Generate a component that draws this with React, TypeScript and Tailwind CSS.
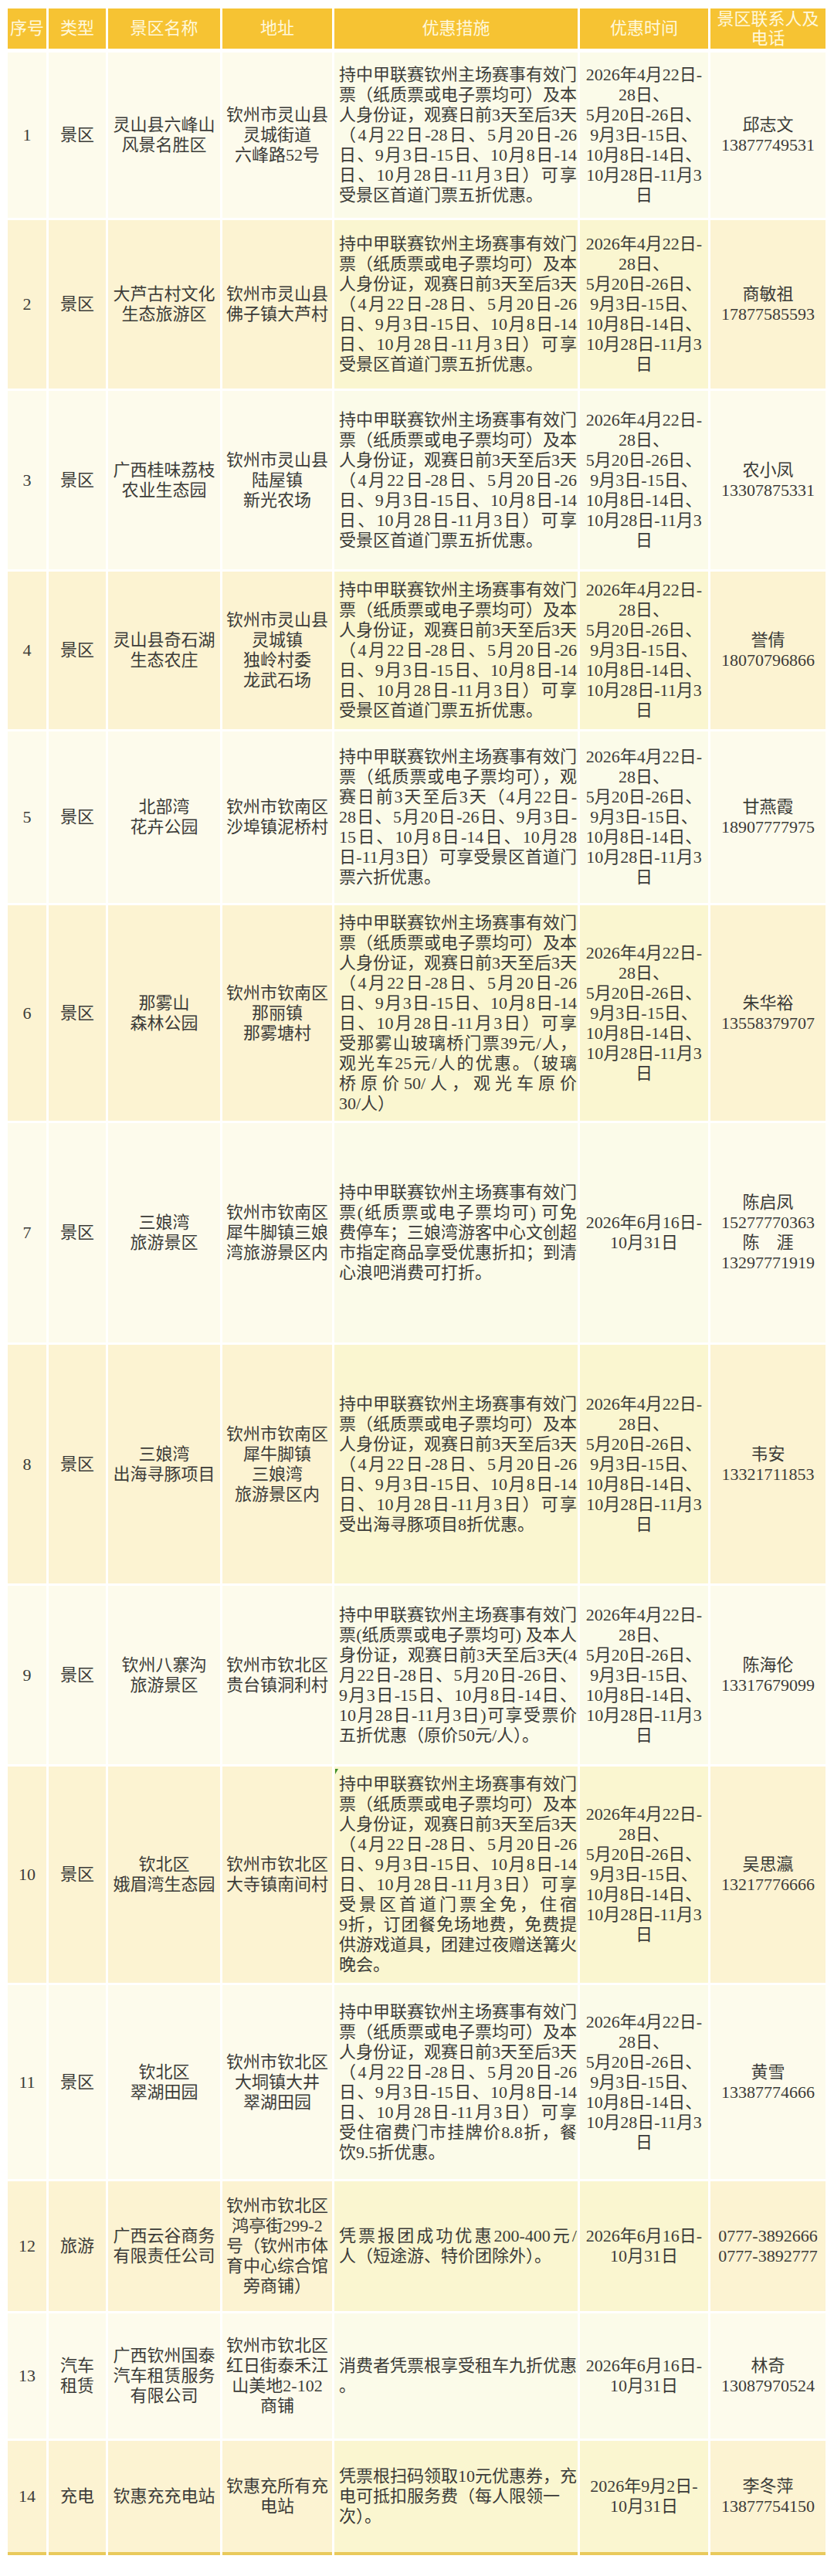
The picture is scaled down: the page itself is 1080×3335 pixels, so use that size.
type Row = {
  no: string;
  type: string[];
  name: string[];
  addr: string[];
  deal: string[];
  plain?: boolean;
  dates: string[];
  contact: string[];
  h: string;
  mark?: boolean;
};

const stdHead = [
  "持中甲联赛钦州主场赛事有效门",
  "票（纸质票或电子票均可）及本",
  "人身份证，观赛日前3天至后3天",
  "（4月22日-28日、5月20日-26",
  "日、9月3日-15日、10月8日-14",
  "日、10月28日-11月3日）可享",
];

const stdDates = [
  "2026年4月22日-",
  "28日、",
  "5月20日-26日、",
  "9月3日-15日、",
  "10月8日-14日、",
  "10月28日-11月3",
  "日",
];

const rows: Row[] = [
  {
    no: "1",
    type: ["景区"],
    name: ["灵山县六峰山", "风景名胜区"],
    addr: ["钦州市灵山县", "灵城街道", "六峰路52号"],
    deal: [...stdHead, "受景区首道门票五折优惠。"],
    dates: stdDates,
    contact: ["邱志文", "13877749531"],
    h: "h-[214px]",
  },
  {
    no: "2",
    type: ["景区"],
    name: ["大芦古村文化", "生态旅游区"],
    addr: ["钦州市灵山县", "佛子镇大芦村"],
    deal: [...stdHead, "受景区首道门票五折优惠。"],
    dates: stdDates,
    contact: ["商敏祖", "17877585593"],
    h: "h-[218px]",
  },
  {
    no: "3",
    type: ["景区"],
    name: ["广西桂味荔枝", "农业生态园"],
    addr: ["钦州市灵山县", "陆屋镇", "新光农场"],
    deal: [...stdHead, "受景区首道门票五折优惠。"],
    dates: stdDates,
    contact: ["农小凤", "13307875331"],
    h: "h-[231px]",
  },
  {
    no: "4",
    type: ["景区"],
    name: ["灵山县奇石湖", "生态农庄"],
    addr: ["钦州市灵山县", "灵城镇", "独岭村委", "龙武石场"],
    deal: [...stdHead, "受景区首道门票五折优惠。"],
    dates: stdDates,
    contact: ["誉倩", "18070796866"],
    h: "h-[204px]",
  },
  {
    no: "5",
    type: ["景区"],
    name: ["北部湾", "花卉公园"],
    addr: ["钦州市钦南区", "沙埠镇泥桥村"],
    deal: [
      "持中甲联赛钦州主场赛事有效门",
      "票（纸质票或电子票均可），观",
      "赛日前3天至后3天（4月22日-",
      "28日、5月20日-26日、9月3日-",
      "15日、10月8日-14日、10月28",
      "日-11月3日）可享受景区首道门",
      "票六折优惠。",
    ],
    dates: stdDates,
    contact: ["甘燕霞", "18907777975"],
    h: "h-[222px]",
  },
  {
    no: "6",
    type: ["景区"],
    name: ["那雾山", "森林公园"],
    addr: ["钦州市钦南区", "那丽镇", "那雾塘村"],
    deal: [
      ...stdHead,
      "受那雾山玻璃桥门票39元/人，",
      "观光车25元/人的优惠。（玻璃",
      "桥原价50/人，观光车原价",
      "30/人）",
    ],
    dates: stdDates,
    contact: ["朱华裕", "13558379707"],
    h: "h-[279px]",
  },
  {
    no: "7",
    type: ["景区"],
    name: ["三娘湾", "旅游景区"],
    addr: ["钦州市钦南区", "犀牛脚镇三娘", "湾旅游景区内"],
    deal: [
      "持中甲联赛钦州主场赛事有效门",
      "票(纸质票或电子票均可) 可免",
      "费停车；三娘湾游客中心文创超",
      "市指定商品享受优惠折扣；到清",
      "心浪吧消费可打折。",
    ],
    dates: ["2026年6月16日-", "10月31日"],
    contact: ["陈启凤", "15277770363", "陈　涯", "13297771919"],
    h: "h-[284px]",
  },
  {
    no: "8",
    type: ["景区"],
    name: ["三娘湾", "出海寻豚项目"],
    addr: ["钦州市钦南区", "犀牛脚镇", "三娘湾", "旅游景区内"],
    deal: [...stdHead, "受出海寻豚项目8折优惠。"],
    dates: stdDates,
    contact: ["韦安", "13321711853"],
    h: "h-[309px]",
  },
  {
    no: "9",
    type: ["景区"],
    name: ["钦州八寨沟", "旅游景区"],
    addr: ["钦州市钦北区", "贵台镇洞利村"],
    deal: [
      "持中甲联赛钦州主场赛事有效门",
      "票(纸质票或电子票均可) 及本人",
      "身份证，观赛日前3天至后3天(4",
      "月22日-28日、5月20日-26日、",
      "9月3日-15日、10月8日-14日、",
      "10月28日-11月3日)可享受票价",
      "五折优惠（原价50元/人）。",
    ],
    dates: stdDates,
    contact: ["陈海伦", "13317679099"],
    h: "h-[231px]",
  },
  {
    no: "10",
    type: ["景区"],
    name: ["钦北区", "娥眉湾生态园"],
    addr: ["钦州市钦北区", "大寺镇南间村"],
    deal: [
      ...stdHead,
      "受景区首道门票全免，住宿",
      "9折，订团餐免场地费，免费提",
      "供游戏道具，团建过夜赠送篝火",
      "晚会。",
    ],
    dates: stdDates,
    contact: ["吴思瀛", "13217776666"],
    h: "h-[280px]",
    mark: true,
  },
  {
    no: "11",
    type: ["景区"],
    name: ["钦北区", "翠湖田园"],
    addr: ["钦州市钦北区", "大垌镇大井", "翠湖田园"],
    deal: [...stdHead, "受住宿费门市挂牌价8.8折，餐", "饮9.5折优惠。"],
    dates: stdDates,
    contact: ["黄雪", "13387774666"],
    h: "h-[251px]",
  },
  {
    no: "12",
    type: ["旅游"],
    name: ["广西云谷商务", "有限责任公司"],
    addr: ["钦州市钦北区", "鸿亭街299-2", "号（钦州市体", "育中心综合馆", "旁商铺）"],
    deal: ["凭票报团成功优惠200-400元/", "人（短途游、特价团除外）。"],
    dates: ["2026年6月16日-", "10月31日"],
    contact: ["0777-3892666", "0777-3892777"],
    h: "h-[168px]",
  },
  {
    no: "13",
    type: ["汽车", "租赁"],
    name: ["广西钦州国泰", "汽车租赁服务", "有限公司"],
    addr: ["钦州市钦北区", "红日街泰禾江", "山美地2-102", "商铺"],
    deal: ["消费者凭票根享受租车九折优惠", "。"],
    dates: ["2026年6月16日-", "10月31日"],
    contact: ["林奇", "13087970524"],
    h: "h-[162px]",
  },
  {
    no: "14",
    type: ["充电"],
    name: ["钦惠充充电站"],
    addr: ["钦惠充所有充", "电站"],
    deal: ["凭票根扫码领取10元优惠券，充", "电可抵扣服务费（每人限领一", "次）。"],
    plain: true,
    dates: ["2026年9月2日-", "10月31日"],
    contact: ["李冬萍", "13877754150"],
    h: "h-[148px]",
  },
];

const cols = "grid grid-cols-[50px_74px_145px_142px_315px_166px_149px] gap-x-[3px]";

function Lines({ lines }: { lines: string[] }) {
  return (
    <div className="text-center">
      {lines.map((l, i) => (
        <div key={i} className="whitespace-nowrap">
          {l}
        </div>
      ))}
    </div>
  );
}

export default function App() {
  const headers = ["序号", "类型", "景区名称", "地址", "优惠措施", "优惠时间"];
  return (
    <main className="min-h-screen bg-white pt-[11px] pl-[10px] font-['Liberation_Serif','Noto_Sans_CJK_SC',serif] text-[22px] leading-[26px] text-[#3b3b38]">
      <div className="w-[1059px] flex flex-col gap-[3px]">
        {/* header */}
        <div className={`${cols} h-[52px] mb-[2px] text-[#fff8dc]`}>
          {headers.map((t) => (
            <div key={t} className="bg-[#f6c333] flex items-center justify-center">
              {t}
            </div>
          ))}
          <div className="bg-[#f6c333] flex items-center justify-center leading-[25px]">
            <Lines lines={["景区联系人及", "电话"]} />
          </div>
        </div>

        {rows.map((r, idx) => {
          const even = idx % 2 === 1;
          const base = even ? "bg-[#fcf3d2]" : "bg-[#fdfbec]";
          const mid = even ? "bg-[#faf6d0]" : "bg-[#fbfbe9]";
          const last = idx === rows.length - 1;
          const edge = last ? "border-b-[4px] border-[#e9c95c]" : "";
          return (
            <div key={r.no} className={`${cols} ${r.h}`}>
              <div className={`${base} ${edge} flex items-center justify-center`}>{r.no}</div>
              <div className={`${base} ${edge} flex items-center justify-center`}>
                <Lines lines={r.type} />
              </div>
              <div className={`${base} ${edge} flex items-center justify-center`}>
                <Lines lines={r.name} />
              </div>
              <div className={`${base} ${edge} flex items-center justify-center`}>
                <Lines lines={r.addr} />
              </div>
              <div className={`${mid} ${edge} relative flex items-center pl-[6px] pr-[1px]`}>
                {r.mark && (
                  <span className="absolute left-[1px] top-[3px] w-0 h-0 border-t-[7px] border-r-[4px] border-t-[#3f8f2a] border-r-transparent" />
                )}
                <div className="w-full text-left">
                  {r.deal.map((l, i) => (
                    <div
                      key={i}
                      className={
                        i < r.deal.length - 1 && !r.plain
                          ? "whitespace-nowrap [text-align-last:justify]"
                          : "whitespace-nowrap"
                      }
                    >
                      {l}
                    </div>
                  ))}
                </div>
              </div>
              <div className={`${mid} ${edge} flex items-center justify-center`}>
                <Lines lines={r.dates} />
              </div>
              <div className={`${base} ${edge} flex items-center justify-center`}>
                <Lines lines={r.contact} />
              </div>
            </div>
          );
        })}
      </div>
    </main>
  );
}
